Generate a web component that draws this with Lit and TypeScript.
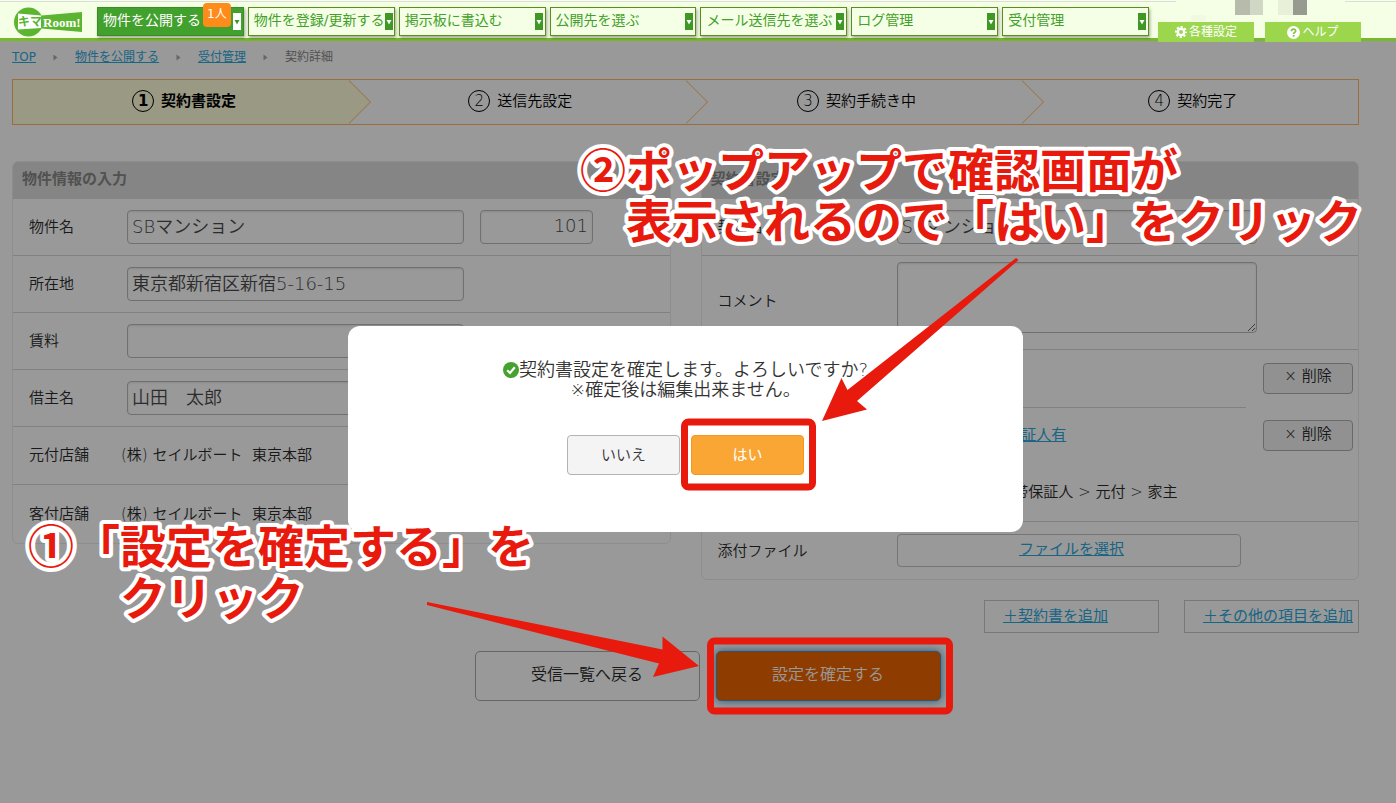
import { LitElement, html, css, svg } from "lit";
import { customElement, state } from "lit/decorators.js";
import { classMap } from "lit/directives/class-map.js";

interface NavItem {
  label: string;
  active?: boolean;
  badge?: string;
}

const NAV: NavItem[] = [
  { label: "物件を公開する", active: true, badge: "1人" },
  { label: "物件を登録/更新する" },
  { label: "掲示板に書込む" },
  { label: "公開先を選ぶ" },
  { label: "メール送信先を選ぶ" },
  { label: "ログ管理" },
  { label: "受付管理" },
];

const STEPS = ["契約書設定", "送信先設定", "契約手続き中", "契約完了"];

@customElement("site-header")
class SiteHeader extends LitElement {
  static styles = css`
    :host {
      display: block;
      position: relative;
      z-index: 2;
      font-weight: 400;
    }
    .bar {
      box-sizing: border-box;
      display: flex;
      align-items: flex-start;
      height: 41px;
      padding: 0 35px 0 13px;
      background: linear-gradient(#dcdcdc, #dcdcdc) 0 1px / 100% 1px no-repeat, #f5ffe6;
      border-bottom: 3px solid #77ba28;
    }
    .logo {
      flex: none;
      width: 84px;
      height: 38px;
    }
    .nav {
      flex: 1;
      display: flex;
      gap: 4px;
      margin-top: 7px;
    }
    .item {
      position: relative;
      flex: 1 1 0;
      min-width: 0;
      box-sizing: border-box;
      height: 29px;
      display: flex;
      align-items: center;
      justify-content: space-between;
      padding: 0 2px 0 5px;
      border: 1px solid #5b8f1c;
      background: #f5ffe6;
      box-shadow: 1px 2px 3px rgba(0, 0, 0, 0.35);
      color: #44a02c;
      font: inherit;
      font-size: 14px;
      line-height: 20px;
      white-space: nowrap;
      text-align: left;
    }
    .item .text {
      padding-bottom: 3px;
    }
    .item.active {
      background: #42a02c;
      border-color: #3a8d26;
      color: #fff;
    }
    .caret {
      flex: none;
      width: 8px;
      height: 17px;
      background: #3f9826;
      color: #fff;
    }
    .active .caret {
      background: #fff;
      color: #3f9826;
    }
    .badge {
      position: absolute;
      top: -5px;
      right: 12px;
      width: 28px;
      height: 24px;
      border-radius: 4px;
      background: #ff8c1a;
      color: #fff;
      font-size: 12px;
      line-height: 22px;
      text-align: center;
    }
    .tools {
      flex: none;
      display: flex;
      gap: 11px;
      margin: 22px 0 0 9px;
    }
    .tool {
      display: flex;
      align-items: center;
      justify-content: center;
      gap: 2px;
      width: 96px;
      height: 20px;
      background: #9bd64d;
      color: #fff;
      font-size: 12px;
      line-height: 20px;
      text-decoration: none;
    }
    .user {
      position: absolute;
      top: 0;
      right: 51px;
      width: 169px;
      height: 22px;
    }
  `;

  render() {
    return html`
      <header class="bar">
        <svg class="logo" viewBox="13 0 84 38" role="img" aria-label="キマRoom!">
          <circle cx="28.500" cy="22" r="14.500" fill="#5cb531" />
          <path d="M18 13.500 L41 15.500 V28 L18 29.500Z" fill="#fff" />
          <path d="M41.500 15.500 L82 12 V32 L41.500 28.500Z" fill="#5cb531" />
          <text x="18" y="26" font-size="12" font-weight="700" fill="#5cb531" font-family="Noto Sans CJK JP, sans-serif">キマ</text>
          <text x="43" y="27" font-size="13" font-weight="700" fill="#fff" font-family="Liberation Serif, serif">Room!</text>
        </svg>
        <nav class="nav">
          ${NAV.map(
            (n) => html`
              <button type="button" class=${classMap({ item: true, active: !!n.active })}>
                <span class="text">${n.label}</span>
                <svg class="caret" viewBox="0 0 8 17" aria-hidden="true">
                  <path d="M1.500 7h5L4 11.500z" fill="currentColor" />
                </svg>
                ${n.badge ? html`<span class="badge">${n.badge}</span>` : ""}
              </button>
            `
          )}
        </nav>
        <div class="tools">
          <a class="tool" href="#settings">
            <svg width="12" height="12" viewBox="0 0 12 12" aria-hidden="true">
              <circle cx="6" cy="6" r="3.200" fill="none" stroke="#fff" stroke-width="2.400" />
              <circle cx="6" cy="6" r="5" fill="none" stroke="#fff" stroke-width="2" stroke-dasharray="2.200 1.727" stroke-dashoffset="1.100" />
            </svg>
            各種設定
          </a>
          <a class="tool" href="#help">
            <svg width="13" height="13" viewBox="0 0 13 13" aria-hidden="true">
              <circle cx="6.500" cy="6.500" r="6.500" fill="#fff" />
              <path d="M4.400 5.200C4.400 2.400 8.700 2.600 8.700 5C8.700 6.400 6.600 6.400 6.600 8" fill="none" stroke="#86c33c" stroke-width="1.700" />
              <rect x="5.700" y="9" width="1.800" height="1.700" fill="#86c33c" />
            </svg>
            ヘルプ
          </a>
        </div>
        <svg class="user" viewBox="0 0 169 22" aria-hidden="true">
          <rect width="169" height="4" fill="#f5ffe6" />
          <rect x="59" width="15" height="15" fill="#b6bbac" />
          <rect x="74" width="13" height="15" fill="#d0d7c4" />
          <rect x="102" width="15" height="15" fill="#e8f0da" />
          <rect x="117" width="14" height="15" fill="#969a8f" />
          <rect x="15" y="15" width="15" height="6" fill="#f0f9e1" />
        </svg>
      </header>
    `;
  }
}

@customElement("step-bar")
class StepBar extends LitElement {
  static styles = css`
    :host {
      display: block;
    }
    .steps {
      display: flex;
      margin: 0;
      padding: 0;
      list-style: none;
      border: 1px solid #ffb669;
    }
    .step {
      position: relative;
      flex: 1 1 0;
      box-sizing: border-box;
      display: flex;
      align-items: center;
      justify-content: center;
      gap: 7px;
      height: 44px;
      padding: 0 0 2px 6px;
      font-size: 15px;
      line-height: 22px;
      color: #000;
    }
    .num {
      box-sizing: border-box;
      width: 22px;
      height: 22px;
      border: 1px solid #000;
      border-radius: 50%;
      line-height: 20px;
      text-align: center;
    }
    .current {
      background: #ffffdc;
      font-weight: 700;
    }
    .arrow {
      position: absolute;
      z-index: 1;
      top: 0;
      left: 100%;
      width: 23px;
      height: 44px;
      fill: #fff;
      stroke: #ffb669;
    }
    .current .arrow {
      fill: #ffffdc;
    }
  `;

  render() {
    return html`
      <ol class="steps">
        ${STEPS.map(
          (s, i) => html`
            <li class=${classMap({ step: true, current: i === 0 })}>
              <span class="num">${i + 1}</span><span>${s}</span>
              ${i < STEPS.length - 1
                ? html`<svg class="arrow" viewBox="0 0 23 44" aria-hidden="true">
                    <path d="M-1 -0.500 L21.500 22 L-1 44.500" />
                  </svg>`
                : ""}
            </li>
          `
        )}
      </ol>
    `;
  }
}

@customElement("contract-form")
class ContractForm extends LitElement {
  static styles = css`
    :host {
      display: block;
      font-size: 15px;
      line-height: 22px;
      color: #2b2b2b;
    }
    .panels {
      display: flex;
      align-items: flex-start;
      gap: 30px;
    }
    .panel {
      flex: 1 1 0;
      min-width: 0;
      box-sizing: border-box;
      border: 1px solid #ececec;
      border-radius: 6px;
      overflow: hidden;
    }
    .title {
      margin: 0;
      padding: 6px 9px 9px;
      background: #dedede;
      color: #888;
      font-size: 15px;
      line-height: 22px;
      font-weight: 700;
    }
    .row {
      box-sizing: border-box;
      display: flex;
      align-items: center;
      min-height: 57px;
      padding-left: 16px;
      border-bottom: 1px solid #d8d8d8;
    }
    .row:last-child {
      border-bottom: 0;
    }
    .row.plain {
      min-height: 58px;
      padding-bottom: 1px;
    }
    .label {
      flex: none;
      width: 98px;
    }
    .plain .label {
      width: 92px;
    }
    .wide .label {
      width: 179px;
    }
    .field {
      box-sizing: border-box;
      height: 34px;
      padding: 0 4px 4px;
      border: 1px solid #bbb;
      border-radius: 4px;
      background: #fff;
      box-shadow: inset 0 1px 2px rgba(0, 0, 0, 0.1);
      color: #4a4a4a;
      font: inherit;
      font-size: 18px;
    }
    .name {
      width: 337px;
    }
    .room {
      width: 113px;
      margin-left: 16px;
      text-align: right;
    }
    .document {
      width: 360px;
    }
    .comment {
      display: block;
      width: 360px;
      height: 71px;
      resize: both;
    }
    .row.note {
      min-height: 94px;
      align-items: flex-start;
      padding-top: 6px;
    }
    .note .label {
      padding-top: 28px;
    }
    .docs {
      display: grid;
      grid-template-columns: 1fr 90px;
      padding: 0 5px 0 16px;
      column-gap: 17px;
      border-bottom: 1px solid #d8d8d8;
    }
    .cell {
      display: flex;
      align-items: center;
      box-sizing: border-box;
      height: 57px;
      padding-bottom: 3px;
    }
    .cell.first {
      height: 58px;
      border-bottom: 1px solid #d8d8d8;
    }
    .cell.last {
      height: 56px;
    }
    .link {
      color: #2aa8dc;
      font-weight: 400;
      text-decoration: underline;
    }
    .small {
      box-sizing: border-box;
      align-self: center;
      width: 90px;
      height: 31px;
      margin-bottom: 2px;
      padding: 0 0 4px;
      border: 1px solid #b0b0b0;
      border-radius: 4px;
      background: #f2f2f2;
      color: #2b2b2b;
      font: inherit;
    }
    .file {
      width: 344px;
      height: 33px;
      padding: 0 0 4px 6px;
      border: 1px solid #c4c4c4;
      border-radius: 4px;
      background: #fff;
      font: inherit;
    }
    .extra {
      display: flex;
      justify-content: flex-end;
      gap: 25px;
      margin-top: 20px;
    }
    .add {
      box-sizing: border-box;
      width: 175px;
      height: 33px;
      padding: 0 0 2px 18px;
      border: 1px solid #c8c8c8;
      background: #fff;
      font: inherit;
      text-align: left;
      white-space: nowrap;
    }
    .actions {
      display: flex;
      justify-content: center;
      gap: 16px;
      margin-top: 18px;
      padding-left: 44px;
    }
    .big {
      box-sizing: border-box;
      width: 225px;
      height: 50px;
      padding: 0 0 2px;
      border: 1px solid #aaa;
      border-radius: 5px;
      background: #fff;
      color: #2b2b2b;
      font: inherit;
      font-size: 16px;
    }
    .primary {
      border-color: #6088a8;
      background: #ee6400;
      color: #fff;
      box-shadow: 0 0 8px #3c8fd0;
    }
  `;

  render() {
    return html`
      <form @submit=${(e: Event) => e.preventDefault()}>
        <div class="panels">
          <section class="panel">
            <h2 class="title">物件情報の入力</h2>
            <div class="row">
              <label class="label" for="building">物件名</label>
              <input class="field name" id="building" value="SBマンション" />
              <input class="field room" aria-label="部屋番号" value="101" />
            </div>
            <div class="row">
              <label class="label" for="address">所在地</label>
              <input class="field name" id="address" value="東京都新宿区新宿5-16-15" />
            </div>
            <div class="row">
              <label class="label" for="rent">賃料</label>
              <input class="field name" id="rent" />
            </div>
            <div class="row">
              <label class="label" for="tenant">借主名</label>
              <input class="field name" id="tenant" value="山田　太郎" />
            </div>
            <div class="row plain">
              <span class="label">元付店舗</span><span>(株) セイルボート&nbsp; 東京本部</span>
            </div>
            <div class="row plain">
              <span class="label">客付店舗</span><span>(株) セイルボート&nbsp; 東京本部</span>
            </div>
          </section>
          <section class="panel">
            <h2 class="title">契約書設定</h2>
            <div class="row wide">
              <label class="label" for="contract">契約名</label>
              <input class="field document" id="contract" value="SBマンション" />
            </div>
            <div class="row wide note">
              <label class="label" for="comment">コメント</label>
              <textarea class="field comment" id="comment"></textarea>
            </div>
            <div class="docs wide">
              <div class="cell first"><span class="label">契約書</span></div>
              <button type="button" class="small">× 削除</button>
              <div class="cell">
                <span class="label"></span><a class="link" href="#document">賃貸契約書 連帯保証人有</a>
              </div>
              <button type="button" class="small">× 削除</button>
              <div class="cell last">
                <span class="label"></span><span>署名順 借主 &gt; 連帯保証人 &gt; 元付 &gt; 家主</span>
              </div>
            </div>
            <div class="row wide">
              <span class="label" id="attach">添付ファイル</span>
              <button type="button" class="file" aria-describedby="attach"><span class="link">ファイルを選択</span></button>
            </div>
          </section>
        </div>
        <div class="extra">
          <button type="button" class="add"><span class="link">＋契約書を追加</span></button>
          <button type="button" class="add"><span class="link">＋その他の項目を追加</span></button>
        </div>
        <div class="actions">
          <button type="button" class="big">受信一覧へ戻る</button>
          <button type="submit" class="big primary">設定を確定する</button>
        </div>
      </form>
    `;
  }
}

@customElement("confirm-dialog")
class ConfirmDialog extends LitElement {
  static styles = css`
    :host {
      position: absolute;
      inset: 0;
      z-index: 1;
      box-sizing: border-box;
      display: flex;
      align-items: flex-start;
      justify-content: center;
      padding: 326px 37px 0 12px;
      background: rgba(0, 0, 0, 0.4);
    }
    .box {
      box-sizing: border-box;
      width: 675px;
      padding: 34px 20px 57px;
      border-radius: 12px;
      background: #fff;
      color: #333;
      text-align: center;
    }
    .message {
      margin: 0 0 35px;
      font-size: 18px;
      line-height: 20px;
    }
    .check {
      width: 16px;
      height: 16px;
      vertical-align: -2px;
    }
    .buttons {
      display: flex;
      justify-content: center;
      gap: 11px;
    }
    .button {
      box-sizing: border-box;
      width: 113px;
      height: 40px;
      padding: 0 0 4px;
      border: 1px solid #b3b3b3;
      border-radius: 4px;
      background: #f4f4f4;
      color: #333;
      font: inherit;
      font-size: 15px;
    }
    .yes {
      border-color: #f7981d;
      background: #faa634;
      color: #fff;
      font-weight: 400;
    }
  `;

  render() {
    return html`
      <div class="box" role="alertdialog" aria-labelledby="message">
        <p class="message" id="message">
          <svg class="check" viewBox="0 0 16 16" aria-hidden="true">
            <circle cx="8" cy="8" r="8" fill="#46a22e" />
            <path d="M4.200 8.300 L7 11 L11.800 5.200" fill="none" stroke="#fff" stroke-width="2.200" /></svg>契約書設定を確定します。よろしいですか?<br />※確定後は編集出来ません。
        </p>
        <div class="buttons">
          <button type="button" class="button">いいえ</button>
          <button type="button" class="button yes">はい</button>
        </div>
      </div>
    `;
  }
}

@customElement("guide-layer")
class GuideLayer extends LitElement {
  static styles = css`
    :host {
      position: absolute;
      inset: 0;
      z-index: 3;
      overflow: hidden;
      pointer-events: none;
    }
    .canvas {
      display: block;
      width: 1396px;
      height: 803px;
    }
    .frame {
      fill: none;
      stroke: #e8190d;
      stroke-width: 7px;
    }
    .arrow {
      fill: #e8190d;
    }
    .caption {
      font-family: "Noto Sans CJK JP", sans-serif;
      font-size: 46px;
      font-weight: 700;
      fill: #e8190d;
      stroke: #fff;
      stroke-width: 8px;
      stroke-linejoin: round;
      paint-order: stroke;
    }
  `;

  render() {
    const captions = [
      { x: 580, y: 187, text: "②ポップアップで確認画面が" },
      { x: 626, y: 238, text: "表示されるので「はい」をクリック" },
      { x: 28, y: 563, text: "①「設定を確定する」を" },
      { x: 120, y: 615, text: "クリック" },
    ];
    return html`
      <svg class="canvas" viewBox="0 0 1396 803">
        <rect class="frame" x="684.500" y="422" width="128" height="65" rx="4" />
        <rect class="frame" x="710.500" y="641" width="239" height="70" rx="4" />
        <path class="arrow" d="M1016 258 L847.500 390 L841.500 378 L822 421 L867 409.500 L857 401 L1018.500 260Z" />
        <path class="arrow" d="M427 602 L662.500 649.500 L662.500 636.500 L699 666 L653 677 L659 663.500 L427 605Z" />
        ${captions.map((c) => svg`<text class="caption" x=${c.x} y=${c.y}>${c.text}</text>`)}
      </svg>
    `;
  }
}

@customElement("app-root")
class AppRoot extends LitElement {
  @state() private dialogOpen = true;

  static styles = css`
    :host {
      position: relative;
      display: block;
      box-sizing: border-box;
      min-height: 100vh;
      background: #fff;
      font-family: "DejaVu Sans", "Noto Sans CJK JP", sans-serif;
      font-weight: 350;
    }
    .page {
      padding: 0 37px 40px 12px;
    }
    .crumbs {
      display: flex;
      align-items: center;
      gap: 17px;
      height: 32px;
      font-size: 12px;
      line-height: 20px;
      font-weight: 400;
      color: #888;
    }
    .link {
      color: #2aa8dc;
      text-decoration: underline;
    }
    .sep {
      width: 5px;
      height: 7px;
    }
    .steps {
      margin: 6px 0 36px;
    }
  `;

  render() {
    const sep = html`<svg class="sep" viewBox="0 0 5 7" aria-hidden="true"><path d="M0.500 0.500 L4.500 3.500 L0.500 6.500Z" fill="#aaa" /></svg>`;
    return html`
      <site-header></site-header>
      <main class="page">
        <nav class="crumbs">
          <a class="link" href="#top">TOP</a>${sep}
          <a class="link" href="#publish">物件を公開する</a>${sep}
          <a class="link" href="#reception">受付管理</a>${sep}
          <span>契約詳細</span>
        </nav>
        <step-bar class="steps"></step-bar>
        <contract-form></contract-form>
      </main>
      ${this.dialogOpen ? html`<confirm-dialog></confirm-dialog>` : ""}
      <guide-layer></guide-layer>
    `;
  }
}
